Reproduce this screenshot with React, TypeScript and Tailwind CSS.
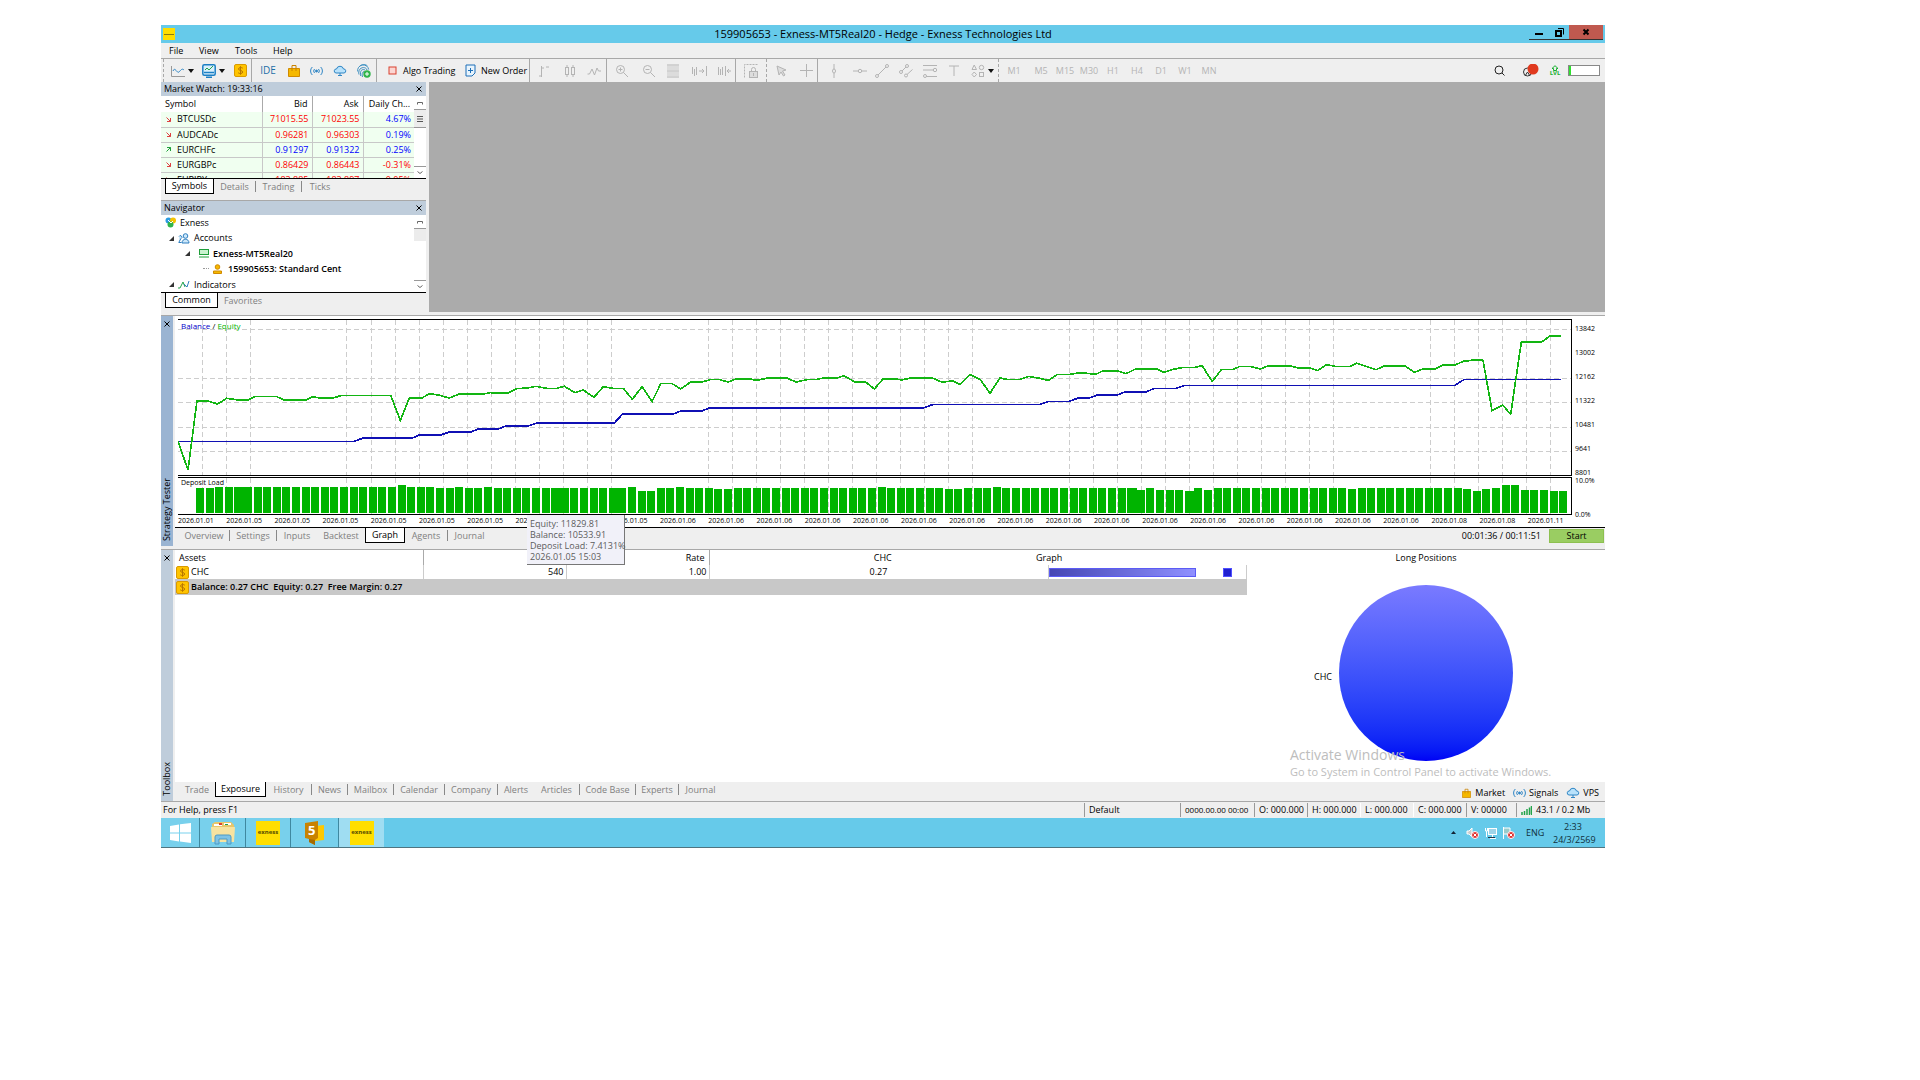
import { useState } from "react";
import type { ReactNode } from "react";

type Quote = { symbol: string; bid: string; ask: string; change: string; up: boolean; neg?: boolean };

const quotes: Quote[] = [
  { symbol: "BTCUSDc", bid: "71015.55", ask: "71023.55", change: "4.67%", up: false },
  { symbol: "AUDCADc", bid: "0.96281", ask: "0.96303", change: "0.19%", up: false },
  { symbol: "EURCHFc", bid: "0.91297", ask: "0.91322", change: "0.25%", up: true },
  { symbol: "EURGBPc", bid: "0.86429", ask: "0.86443", change: "-0.31%", up: false, neg: true },
  { symbol: "EURJPYc", bid: "183.885", ask: "183.897", change: "-0.05%", up: false, neg: true },
];

// curve points in thirds of a pixel, origin at the chart's top left
const equity =
  "0,364 30,450 57,242 90,243 119,252 146,235 181,240 211,240 231,229 294,229 318,240 384,240 404,230 426,234 466,234 491,226 638,226 667,301 694,234 730,235 754,221 782,225 813,234 844,222 916,222 936,218 989,219 1016,206 1049,204 1074,199 1106,205 1136,205 1159,199 1191,218 1216,210 1248,232 1276,200 1306,205 1336,205 1363,238 1392,200 1422,245 1449,190 1481,190 1508,207 1538,186 1571,186 1601,178 1621,178 1651,186 1676,176 1711,176 1736,181 1769,174 1826,174 1854,186 1888,179 1918,178 1936,174 1976,174 1998,167 2030,186 2063,186 2089,207 2116,176 2146,176 2171,180 2198,174 2263,174 2291,186 2326,183 2346,193 2376,164 2408,180 2436,220 2466,174 2486,178 2528,178 2551,169 2586,175 2611,181 2639,163 2676,163 2706,158 2754,163 2776,152 2816,152 2844,161 2871,148 2934,146 2956,157 2986,148 3016,142 3051,142 3072,137 3103,184 3131,148 3166,148 3186,139 3216,139 3246,147 3269,138 3339,138 3361,144 3396,144 3419,152 3446,134 3471,139 3516,139 3536,130 3594,149 3618,138 3681,138 3710,157 3736,146 3774,146 3796,135 3831,135 3856,124 3896,119 3915,121 3942,271 3974,255 3998,283 4030,66 4091,66 4116,48 4149,48";
const balance =
  "0,364 528,364 556,354 703,354 726,344 791,344 814,336 878,336 901,327 961,327 986,317 1052,317 1076,309 1309,309 1334,282 1486,282 1509,273 1571,273 1596,263 2239,263 2266,253 2588,253 2611,244 2674,244 2698,235 2734,234 2758,225 2818,225 2841,216 2904,216 2929,205 2996,205 3019,196 3831,196 3859,178 4149,178";

const gridSteps = Array.from({ length: 57 }, (_, k) => k).filter((k) => k < 3 || (k - 6) % 15 < 12 && k >= 6);
const gridRows = [28, 174, 247, 322, 395];

const loadTop: Record<number, number> = {
  2: 24, 21: 21, 27: 27, 30: 27, 45: 27, 46: 39, 47: 39, 50: 27, 54: 33, 55: 33, 71: 27, 78: 33, 79: 33, 83: 27,
  98: 36, 100: 36, 101: 36, 102: 36, 103: 39, 105: 36, 120: 33, 132: 33, 133: 39, 134: 33, 136: 21, 137: 21,
  138: 36, 139: 36, 140: 36, 141: 39, 142: 39,
};
const joined = [4, 37, 43, 97, 103];
const bars = Array.from({ length: 143 }, (_, i) => ({
  x: Math.round(18 + i * 9.6) * 3,
  w: joined.includes(i) ? 30 : 25,
  y: loadTop[i] ?? (i > 2 && i < 25 ? 27 : 30),
}));

const dates = Array.from({ length: 29 }, (_, i) => {
  if (i === 0) return "2026.01.01";
  if (i < 10) return "2026.01.05";
  if (i < 26) return "2026.01.06";
  return i < 28 ? "2026.01.08" : "2026.01.11";
});

const Icon = ({ children, w = 14, h = 14, color = "#b4b4b4" }: { children: ReactNode; w?: number; h?: number; color?: string }) => (
  <svg width={w} height={h} viewBox={`0 0 ${w} ${h}`} fill="none" stroke={color} strokeWidth="1" className="shrink-0">
    {children}
  </svg>
);

const Caret = () => (
  <svg width="6" height="4" viewBox="0 0 6 4" className="shrink-0">
    <path d="M0 0h6L3 4z" fill="#111" />
  </svg>
);

const Tool = ({ label, className, children }: { label: string; className: string; children: ReactNode }) => (
  <button aria-label={label} className={`flex h-full shrink-0 items-center justify-center ${className}`}>
    {children}
  </button>
);

const Sep = () => <div className="h-full w-px shrink-0 bg-[#a8a8a8]" />;
const Dots = () => <div className="h-full w-px shrink-0 border-l border-dashed border-[#a8a8a8]" />;

const Coin = () => (
  <Icon w={13} h={13} color="#d99a00">
    <rect x="0.5" y="0.5" width="12" height="12" rx="1.5" fill="#ffc400" />
    <path d="M8.8 4.2C8 3.3 4.5 3.1 4.5 5s4.2 1.1 4.2 3S5.2 9.900 4.200 8.800M6.500 2.200v8.600" stroke="#b87600" />
  </Icon>
);

const Waves = () => (
  <Icon w={13} h={10} color="#2f86c5">
    <circle cx="6.500" cy="5" r="1" fill="#2f86c5" />
    <path d="M4.500 3a3 3 0 0 0 0 4M8.500 3a3 3 0 0 1 0 4M2.300 1a5.500 5.500 0 0 0 0 8M10.700 1a5.500 5.500 0 0 1 0 8" />
  </Icon>
);

const Cloud = () => (
  <Icon w={14} h={12} color="#2f86c5">
    <path d="M3 8a2 2 0 0 1 .5-4 3.600 3.600 0 0 1 7 0 2 2 0 0 1 .5 4z" fill="#b9e2fb" />
    <path d="M7 8v3M5 10.500h4" />
  </Icon>
);

const Bag = ({ w = 12 }: { w?: number }) => (
  <svg width={w} height={w + 1} viewBox="0 0 12 13" fill="none" className="shrink-0">
    <path d="M.5 4.500h11v8H.5z" fill="#f5b800" stroke="#d08a00" />
    <path d="M4 7V1.500h4V7" stroke="#c98200" />
  </svg>
);

const TitleBar = () => (
  <header className="flex h-[18px] items-center bg-[#66caea]">
    <div className="w-24 pl-[2px]">
      <div className="flex h-3 w-3 items-center bg-[#ffde00] px-px"><div className="h-px w-full bg-[#8a7a10]" /></div>
    </div>
    <h1 className="flex-1 text-center text-[11px] leading-[18px] text-black">159905653 - Exness-MT5Real20 - Hedge - Exness Technologies Ltd</h1>
    <div className="flex h-full w-24 items-start justify-end pr-[2px]">
      <div className="flex h-[15px] border-b border-[#333]">
        <button aria-label="Minimize" className="flex w-5 items-center justify-center">
          <Icon w={10} h={10}><path d="M1 7h8" stroke="#000" strokeWidth="2" /></Icon>
        </button>
        <button aria-label="Restore" className="flex w-5 items-center justify-center">
          <Icon w={9} h={9} color="#000"><rect x="1" y="3" width="5" height="5" strokeWidth="2" /><path d="M3 .5h5.500v6" /></Icon>
        </button>
        <button aria-label="Close" className="flex w-[34px] items-center justify-center bg-[#c0594f]">
          <Icon w={8} h={8} color="#000"><path d="M1.500 1.500l5 5M6.500 1.500l-5 5" strokeWidth="2" /></Icon>
        </button>
      </div>
    </div>
  </header>
);

const MenuBar = () => (
  <nav className="flex h-4 items-center border-b border-[#a8a8a8] pl-2 text-[9px] text-black">
    <button className="w-[30px] text-left">File</button>
    <button className="w-9 text-left">View</button>
    <button className="w-[38px] text-left">Tools</button>
    <button className="text-left">Help</button>
  </nav>
);

const Toolbar = () => (
  <div className="flex h-[23px] items-center overflow-hidden text-[9px] whitespace-nowrap text-black">
    <div className="flex h-full w-[6px] shrink-0 pl-[2px]"><Dots /></div>
    <Tool label="Chart" className="w-[30px] gap-[3px]">
      <Icon><path d="M.5 2v10.500H14" stroke="#999" /><path d="M2 7c2-5 4 3 6 1s3-4 5-2" stroke="#2f86c5" /></Icon>
      <Caret />
    </Tool>
    <Tool label="Indicators" className="w-8 gap-[3px]">
      <Icon color="#1c7fc4"><rect x=".8" y=".8" width="12.400" height="10.400" rx="1.500" fill="#d9effc" strokeWidth="1.500" /><path d="M3 6l2-2 2 2 4-4" stroke="#22a34a" /><path d="M2 8.500h10M4 13.300h6" strokeWidth="1.500" /></Icon>
      <Caret />
    </Tool>
    <Tool label="Quotes" className="w-[22px]"><Coin /></Tool>
    <Sep />
    <Tool label="IDE" className="w-8"><span className="text-[10px] text-[#1c6fa8]">IDE</span></Tool>
    <Tool label="Market" className="w-5"><Bag /></Tool>
    <Tool label="Signals" className="w-6"><Waves /></Tool>
    <Tool label="VPS" className="w-6"><Cloud /></Tool>
    <Tool label="Login" className="w-6">
      <Icon color="#3d8fc0">
        <path d="M.7 7.500a5.500 5.500 0 0 1 11-2M2 10.500a5 5 0 0 1-.2-2.500c.5-5.500 7.500-5.500 8.200-2M3.700 12c-1-5 1-7.500 4.300-6M5.500 13c-1-3 0-5 1.500-5.500M2.500 2.500C5 0 8.500 0 10.500 2" />
        <circle cx="10" cy="10" r="3.700" fill="#2fb44a" stroke="none" /><path d="M10 8v4M8 10h4" stroke="#fff" />
      </Icon>
    </Tool>
    <Sep />
    <button className="flex h-full w-[84px] shrink-0 items-center gap-[6px] pl-[11px]">
      <Icon w={9} h={9} color="#d9402f"><rect x="1" y="1" width="7" height="7" fill="#fbd6d2" /></Icon>Algo Trading
    </button>
    <button className="flex h-full w-[68px] shrink-0 items-center gap-[5px] pl-1">
      <Icon w={11} h={13} color="#1c6fb8"><path d="M1 1h9v8l-3 3H1z" fill="#e8f4fd" /><path d="M5.500 4v5M3 6.500h5" /></Icon>New Order
    </button>
    <Sep />
    <Tool label="Bar chart" className="w-7"><Icon w={12}><path d="M3.500 2v11M1 12h2.500M3.500 4H6M8 3h3" /></Icon></Tool>
    <Tool label="Candles" className="w-6"><Icon w={12}><rect x="1.500" y="3.500" width="3" height="7" /><rect x="7.500" y="3.500" width="3" height="7" /><path d="M3 1v2M3 11v2M9 1v2M9 11v2" /></Icon></Tool>
    <Tool label="Line chart" className="w-6"><Icon><path d="M.5 10h2l2.500-5 2.500 6L10 4l1.500 3H14" /></Icon></Tool>
    <Sep />
    <Tool label="Zoom in" className="w-[30px]"><Icon><circle cx="5.500" cy="5.500" r="4" /><path d="M8.500 8.500l4.500 4.500M3.500 5.500h4M5.500 3.500v4" /></Icon></Tool>
    <Tool label="Zoom out" className="w-6"><Icon><circle cx="5.500" cy="5.500" r="4" /><path d="M8.500 8.500l4.500 4.500M3.500 5.500h4" /></Icon></Tool>
    <Tool label="Tile" className="w-6"><Icon w={12}><path d="M0 4h12M0 10h12" stroke="#dcdcdc" strokeWidth="4" /><path d="M0 1h12M0 7h12M0 13h12" /></Icon></Tool>
    <Tool label="Scroll to end" className="w-7"><Icon w={16}><path d="M1.500 3v7M3.500 5v7M5.500 3v8M8 7h5M11 5l2 2-2 2M15.500 2v10" /></Icon></Tool>
    <Tool label="Shift chart" className="w-[22px]"><Icon><path d="M1.500 3v8M3.500 5v6M5.500 3v8M8.500 2v10M14 7h-4M12 5l-2 2 2 2" /></Icon></Tool>
    <Sep />
    <Tool label="Lock" className="w-[30px]">
      <Icon><path d="M.5 13.500V.5h13" strokeDasharray="2 1" /><rect x="5.500" y="7.500" width="8" height="6" fill="#ddd" /><path d="M7.500 7V5.500a2 2 0 0 1 4 0V7M9.500 9v3" /></Icon>
    </Tool>
    <Dots />
    <Tool label="Cursor" className="w-7"><Icon w={11}><path d="M1 2l9 4-3.500 1L9 11l-1.500 1L5 8l-2 3z" fill="#ddd" /></Icon></Tool>
    <Tool label="Crosshair" className="w-[22px]"><Icon w={13} h={13}><path d="M0 6.500h5M8 6.500h5M6.500 0v5M6.500 8v5M5 6.500h3M6.500 5v3" /></Icon></Tool>
    <Sep />
    <Tool label="Vertical line" className="w-8"><Icon w={6}><path d="M3 0v5M3 9v5" /><ellipse cx="3" cy="7" rx="1.500" ry="2" /></Icon></Tool>
    <Tool label="Horizontal line" className="w-5"><Icon><path d="M0 7h5M9 7h5" /><circle cx="7" cy="7" r="1.700" /></Icon></Tool>
    <Tool label="Trend line" className="w-6"><Icon><circle cx="12" cy="2" r="1.500" /><circle cx="2" cy="12" r="1.500" /><path d="M3 11l8-8" /></Icon></Tool>
    <Tool label="Channel" className="w-6"><Icon><circle cx="8" cy="2" r="1.500" /><circle cx="2" cy="8" r="1.500" /><circle cx="7" cy="11.500" r="1.500" /><path d="M3 7l4-4M8 10.500l5.500-5" /></Icon></Tool>
    <Tool label="Fibonacci" className="w-6"><Icon><path d="M0 1.500h14M0 6h10M3 12.500h11" /><circle cx="12" cy="6" r="1.700" /><circle cx="2" cy="12" r="1.500" /></Icon></Tool>
    <Tool label="Text" className="w-6"><Icon w={10} h={12}><path d="M0 1h10M5 1v10" /></Icon></Tool>
    <Tool label="Shapes" className="w-8 gap-[3px]">
      <Icon><path d="M1 5.500h4.500L3.200 1zM3.200 8l2.300 2.500-2.300 2.500L1 10.500z" /><circle cx="10.500" cy="3.500" r="2.200" /><rect x="8.500" y="8.500" width="4" height="4" /></Icon>
      <Caret />
    </Tool>
    <Dots />
    {["M1", "M5", "M15", "M30", "H1", "H4", "D1", "W1", "MN"].map((tf) => (
      <button key={tf} className={`shrink-0 text-center text-[#b4b4b4] ${tf === "M1" ? "w-[30px]" : "w-6"}`}>{tf}</button>
    ))}
    <div className="ml-auto flex items-center gap-2 pr-[5px]">
      <div className="flex w-5 items-center"><Icon w={11} h={11} color="#222"><circle cx="5" cy="5" r="4" /><path d="M8 8l2.500 2.500" /></Icon></div>
      <Icon w={20} h={14} color="#333"><circle cx="5.500" cy="8" r="4" /><path d="M3 12l2.500-4 2.500 4" /><circle cx="11" cy="5" r="5.500" fill="#e0391e" stroke="none" /></Icon>
      <div className="flex w-[10px] flex-col items-center text-[6px] leading-[5px] font-bold text-[#16b02e]">
        <Icon w={8} h={6} color="#16b02e"><path d="M4 .7L1 3.500h1.500v2h3v-2H7z" /></Icon>LVL
      </div>
      <div className="h-[11px] w-8 border border-[#888] bg-white"><div className="h-full w-[2px] bg-[#2fe02f]" /></div>
    </div>
  </div>
);

const PanelHead = ({ title }: { title: string }) => (
  <div className="flex h-[14px] items-center justify-between bg-[#bfcddb] pr-1 pl-[3px] text-[9px] text-black">
    <span>{title}</span>
    <button aria-label={`Close ${title}`}><Icon w={6} h={6} color="#000"><path d="M.5.5l5 5M5.500.5l-5 5" /></Icon></button>
  </div>
);

const Scroll = ({ grip }: { grip?: boolean }) => (
  <div className="flex w-3 shrink-0 flex-col items-center justify-between bg-white">
    <div className="w-full">
      <div className="flex h-[14px] items-center justify-center border-b border-[#999]"><Icon w={6} h={4} color="#666"><path d="M.5 3.500V1.500h5v2" /></Icon></div>
      <div className={`flex items-center justify-center bg-[#ececec] ${grip ? "h-[18px] border-b border-[#999]" : "h-3"}`}>
        {grip && <Icon w={6} h={6} color="#555"><path d="M0 .5h6M0 3h6M0 5.500h6" /></Icon>}
      </div>
    </div>
    <div className="flex h-3 w-full items-center justify-center border-t border-[#999]"><Icon w={6} h={4} color="#666"><path d="M.5.500l2.500 2 2.500-2" /></Icon></div>
  </div>
);

type TabDef = { name: string; w: string; sep?: boolean };

const Tabs = ({ tabs, start, pad, height }: { tabs: TabDef[]; start: string; pad: string; height: string }) => {
  const [active, setActive] = useState(start);
  return (
    <div className={`flex min-w-0 items-start text-[9px] ${pad} ${height}`}>
      {tabs.map((t) => (
        <button
          key={t.name}
          onClick={() => setActive(t.name)}
          className={`h-[15px] shrink-0 leading-[14px] ${t.w} ${
            active === t.name ? "border border-t-0 border-black bg-white text-black" : "text-[#808080]"
          }`}
        >
          <span className={`flex h-[11px] items-center justify-center ${t.sep ? "border-r border-[#888]" : ""}`}>{t.name}</span>
        </button>
      ))}
    </div>
  );
};

const MarketWatch = () => (
  <section>
    <PanelHead title="Market Watch: 19:33:16" />
    <div className="flex h-[83px] overflow-hidden border-b border-black bg-white">
      <div className="min-w-0 flex-1 overflow-hidden">
        <table className="w-full table-fixed border-collapse text-[9px] leading-[14px]">
          <thead>
            <tr className="h-4 text-black">
              <th className="w-[101px] pl-1 text-left font-normal">Symbol</th>
              <th className="w-[50px] border-l border-[#aaa] pr-1 text-right font-normal">Bid</th>
              <th className="w-[51px] border-l border-[#aaa] pr-1 text-right font-normal">Ask</th>
              <th className="border-l border-[#aaa] pr-1 text-right font-normal whitespace-nowrap">Daily Ch...</th>
            </tr>
          </thead>
          <tbody>
            {quotes.map((q) => (
              <tr key={q.symbol} className={`h-[15px] border-b border-[#c8c8c8] bg-[#f0fff0] ${q.up ? "text-[#0000ff]" : "text-[#ff0000]"}`}>
                <td className="pl-[5px] text-black">
                  <span className="flex items-center gap-[6px]">
                    {q.up ? (
                      <Icon w={5} h={5} color="#1f9e3a"><path d="M.5 4.500l4-4M1 .5h3.500V4" /></Icon>
                    ) : (
                      <Icon w={5} h={5} color="#dd4040"><path d="M.5.500l4 4M1 4.500h3.500V1" /></Icon>
                    )}
                    {q.symbol}
                  </span>
                </td>
                <td className="border-l border-[#c8c8c8] pr-[3px] text-right">{q.bid}</td>
                <td className="border-l border-[#c8c8c8] pr-[3px] text-right">{q.ask}</td>
                <td className={`border-l border-[#c8c8c8] pr-[3px] text-right ${q.neg ? "text-[#ff0000]" : "text-[#0000ff]"}`}>{q.change}</td>
              </tr>
            ))}
          </tbody>
        </table>
      </div>
      <Scroll grip />
    </div>
    <Tabs
      start="Symbols"
      pad="pl-1"
      height="h-[21px]"
      tabs={[
        { name: "Symbols", w: "w-[49px]" },
        { name: "Details", w: "w-[42px]", sep: true },
        { name: "Trading", w: "w-[46px]", sep: true },
        { name: "Ticks", w: "w-9" },
      ]}
    />
  </section>
);

const Node = () => <Icon w={5} h={5} color="#333"><path d="M0 5h5V0z" fill="#333" stroke="none" /></Icon>;
const row = "flex flex-1 items-center gap-1";

const Navigator = () => (
  <section className="border-t border-[#a8a8a8]">
    <PanelHead title="Navigator" />
    <div className="flex h-[78px] border-b border-black bg-white">
      <div className="flex flex-1 flex-col text-[9px] text-black">
        <div className={`${row} pl-1`}>
          <Icon w={11} h={11} color="none"><circle cx="3.500" cy="3.500" r="3" fill="#2b9be0" /><circle cx="8" cy="3.500" r="3" fill="#f5c400" /><circle cx="5.500" cy="7.500" r="3" fill="#2fb44a" /><path d="M3 3l3 3 2-2" stroke="#fff" /></Icon>
          Exness
        </div>
        <div className={`${row} pl-2`}>
          <Node />
          <Icon w={12} h={11} color="#2f7fc0"><circle cx="7.500" cy="3" r="2.300" fill="#cde8fa" /><path d="M4 10c0-5 7-5 7 0zM.5 9.500h3M1 3.500a1.500 1.500 0 1 1 2 2L1 9" fill="#cde8fa" /></Icon>
          Accounts
        </div>
        <div className={`${row} pl-6 font-semibold`}>
          <Node />
          <span className="w-px" />
          <Icon w={10} h={9} color="#1f9e3a"><rect x=".5" y=".5" width="9" height="5" fill="#c9f2cf" /><path d="M0 8h10" /></Icon>
          Exness-MT5Real20
        </div>
        <div className={`${row} pl-[42px] font-semibold`}>
          <span className="w-[6px] border-t border-dotted border-[#999]" />
          <Icon w={9} h={10} color="#d08a00"><circle cx="4.500" cy="3" r="2.300" fill="#f5b800" /><path d="M.5 9.500V7h8v2.500z" fill="#f5b800" /></Icon>
          <span className="pl-[2px]">159905653: Standard Cent</span>
        </div>
        <div className={`${row} pl-2`}>
          <Node />
          <Icon w={12} h={9} color="#22a34a"><path d="M0 8h2l3-6 2 5" /><path d="M6 4l3 3 2-6" stroke="#2f7fc0" /></Icon>
          Indicators
        </div>
      </div>
      <Scroll />
    </div>
    <Tabs
      start="Common"
      pad="pl-1"
      height="h-[19px]"
      tabs={[
        { name: "Common", w: "w-[53px]" },
        { name: "Favorites", w: "w-[50px]" },
      ]}
    />
  </section>
);

const SideStrip = ({ title, color }: { title: string; color: string }) => (
  <div className={`flex w-3 shrink-0 flex-col items-center justify-between py-[5px] ${color}`}>
    <button aria-label={`Close ${title}`}><Icon w={6} h={6} color="#000"><path d="M.5.5l5 5M5.500.5l-5 5" /></Icon></button>
    <span className="rotate-180 text-[9px] leading-[12px] text-black [writing-mode:vertical-rl]">{title}</span>
  </div>
);

const Tooltip = () => (
  <div className="absolute top-[199px] left-[366px] z-10 h-[50px] w-[98px] border-r border-b border-[#777] bg-[#f1f1f9] pt-[3px] pl-[3px] text-[9px] leading-[11px] whitespace-nowrap text-[#5c5c5c]">
    <p>Equity: 11829.81</p>
    <p>Balance: 10533.91</p>
    <p>Deposit Load: 7.4131%</p>
    <p>2026.01.05 15:03</p>
  </div>
);

const Graph = () => (
  <div className="flex h-[212px] border-b border-black bg-white pt-[3px] pl-[3px]">
    <div className="min-w-0 flex-1">
      <div className="relative h-[157px] border-y border-r border-black">
        <svg className="block h-full w-full" viewBox="0 0 4179 465" preserveAspectRatio="none" shapeRendering="crispEdges" fill="none">
          <g stroke="#cdcdcd" strokeWidth="3" strokeDasharray="15 9">
            {gridSteps.map((k) => <path key={k} d={`M${73 + Math.round(k * 72.22)} 0v465`} />)}
            {gridRows.map((y) => <path key={y} d={`M0 ${y}h4179`} />)}
          </g>
          <polyline points={balance} stroke="#1010b4" strokeWidth="5" />
          <polyline points={equity} stroke="#12b512" strokeWidth="5" />
        </svg>
        <div className="absolute top-px left-[3px] text-[8px] leading-[10px] text-black">
          <span className="text-[#0000c8]">Balance</span> / <span className="text-[#00b400]">Equity</span>
        </div>
      </div>
      <div className="relative mt-px h-[38px] border-y border-r border-black">
        <svg className="block h-full w-full" viewBox="0 0 4179 108" preserveAspectRatio="none" shapeRendering="crispEdges">
          {gridSteps.map((k) => <path key={k} d={`M${73 + Math.round(k * 72.22)} 0v108`} stroke="#cdcdcd" strokeWidth="3" strokeDasharray="15 9" />)}
          {bars.map((b, i) => <rect key={i} x={b.x} y={b.y} width={b.w} height={105 - b.y} fill="#00b400" />)}
        </svg>
        <div className="absolute top-0 left-[2px] bg-white px-px text-[7px] leading-[9px] text-black">Deposit Load</div>
      </div>
      <div className="-mr-1 grid grid-cols-29 text-[7px] leading-[11px] text-black">
        {dates.map((d, i) => <span key={i} className="whitespace-nowrap">{d}</span>)}
      </div>
    </div>
    <div className="flex h-[200px] w-[33px] shrink-0 flex-col pl-[3px] text-[7px] text-black">
      {["13842", "13002", "12162", "11322", "10481", "9641"].map((v) => <span key={v} className="h-6 leading-5">{v}</span>)}
      <span className="h-[14px] leading-5">8801</span>
      <span className="leading-2">10.0%</span>
      <span className="mt-auto leading-2">0.0%</span>
    </div>
  </div>
);

const StrategyTester = () => (
  <section className="relative flex h-[234px] gap-[2px] border-t border-[#a8a8a8]">
    <SideStrip title="Strategy Tester" color="mb-[3px] bg-[#9ab4d2]" />
    <div className="min-w-0 flex-1">
      <Graph />
      <div className="flex">
        <Tabs
          start="Graph"
          pad="pl-1"
          height="h-5"
          tabs={[
            { name: "Overview", w: "w-[51px]", sep: true },
            { name: "Settings", w: "w-[47px]", sep: true },
            { name: "Inputs", w: "w-10" },
            { name: "Backtest", w: "w-12" },
            { name: "Graph", w: "w-10" },
            { name: "Agents", w: "w-[43px]", sep: true },
            { name: "Journal", w: "w-[43px]" },
          ]}
        />
        <div className="ml-auto flex items-start gap-2 pt-px pr-px">
          <span className="text-[9px] leading-[14px] text-black">00:01:36 / 00:11:51</span>
          <button className="h-[14px] w-[55px] border border-[#8dc050] bg-[#9acd62] text-[9px] leading-3 text-black">Start</button>
        </div>
      </div>
    </div>
    <Tooltip />
  </section>
);

const Exposure = () => (
  <div className="flex h-[232px] bg-white text-[9px] text-black">
    <div className="min-w-0 flex-1">
      <table className="w-full table-fixed border-collapse leading-[14px]">
        <thead>
          <tr className="h-[15px]">
            <th className="w-[248px] border-r border-[#aaa] pl-1 text-left font-normal">Assets</th>
            <th className="w-[143px]" />
            <th className="w-[143px] border-r border-[#aaa] pr-1 text-right font-normal">Rate</th>
            <th className="w-[339px] pl-2 text-center font-normal">CHC</th>
            <th className="font-normal"><span className="flex -translate-x-3">Graph</span></th>
          </tr>
        </thead>
        <tbody>
          <tr className="h-[14px]">
            <td className="border-r border-[#ccc] pl-px"><span className="flex items-center gap-[2px]"><Coin />CHC</span></td>
            <td className="border-r border-[#ccc] pr-[2px] text-right">540</td>
            <td className="border-r border-[#ccc] pr-[2px] text-right">1.00</td>
            <td className="border-r border-[#ccc] text-center">0.27</td>
            <td className="border-r border-[#ccc]">
              <div className="flex items-center justify-between pr-[14px]">
                <div className="h-[9px] w-[147px] border border-[#5b5bf5] bg-linear-to-r from-[#4646b4] to-[#9090ff]" />
                <div className="h-[9px] w-[9px] border border-[#5050ff] bg-[#2020d0]" />
              </div>
            </td>
          </tr>
          <tr className="h-4 bg-[#c8c8c8] font-semibold">
            <td colSpan={5} className="pl-px"><span className="flex items-center gap-[2px]"><Coin />Balance: 0.27 CHC&nbsp; Equity: 0.27&nbsp; Free Margin: 0.27</span></td>
          </tr>
        </tbody>
      </table>
    </div>
    <div className="relative flex w-[358px] shrink-0 flex-col items-center">
      <h2 className="leading-[16px]">Long Positions</h2>
      <div className="mt-[19px] flex w-full items-center">
        <span className="flex-1 px-[7px] pt-2 text-right">CHC</span>
        <div className="h-[176px] w-[174px] rounded-[50%] bg-linear-to-b from-[#7a7aff] to-[#0000f5]" />
        <span className="flex-1 px-[7px]" />
      </div>
      <div className="absolute top-[196px] left-[43px] whitespace-nowrap text-[#bdbdbd]">
        <p className="text-[14px] leading-[18px]">Activate Windows</p>
        <p className="text-[11px] leading-[16px]">Go to System in Control Panel to activate Windows.</p>
      </div>
    </div>
  </div>
);

const Toolbox = () => (
  <section className="flex gap-[2px] border-t border-[#a8a8a8]">
    <SideStrip title="Toolbox" color="bg-[#bfcddb]" />
    <div className="min-w-0 flex-1">
      <Exposure />
      <div className="flex h-[19px] items-start">
        <Tabs
          start="Exposure"
          pad="pl-1"
          height="h-[19px]"
          tabs={[
            { name: "Trade", w: "w-9" },
            { name: "Exposure", w: "w-[51px]" },
            { name: "History", w: "w-[46px]", sep: true },
            { name: "News", w: "w-9", sep: true },
            { name: "Mailbox", w: "w-[46px]", sep: true },
            { name: "Calendar", w: "w-[51px]", sep: true },
            { name: "Company", w: "w-[53px]", sep: true },
            { name: "Alerts", w: "w-9" },
            { name: "Articles", w: "w-[46px]", sep: true },
            { name: "Code Base", w: "w-[56px]", sep: true },
            { name: "Experts", w: "w-[43px]", sep: true },
            { name: "Journal", w: "w-[43px]" },
          ]}
        />
        <div className="ml-auto flex h-[19px] items-center gap-2 pt-[2px] pr-[6px] text-[9px] text-black">
          <a href="#market" className="flex items-center gap-1"><Bag w={9} />Market</a>
          <a href="#signals" className="flex items-center gap-[3px]"><Waves />Signals</a>
          <a href="#vps" className="flex items-center gap-[3px]"><Cloud />VPS</a>
        </div>
      </div>
    </div>
  </section>
);

const StatusBar = () => (
  <footer className="flex h-[17px] items-center border-t border-[#a8a8a8] text-[9px] whitespace-nowrap text-black">
    <span className="flex-1 pl-[2px]">For Help, press F1</span>
    <span className="w-24 border-l border-[#999] pl-1">Default</span>
    <span className="w-[74px] border-l border-[#999] pl-1 text-[8px] leading-[14px]">0000.00.00 00:00</span>
    <span className="w-[53px] border-l border-[#999] pl-1">O: 000.000</span>
    <span className="w-[53px] border-l border-[#999] pl-1">H: 000.000</span>
    <span className="w-[53px] border-l border-white pl-1">L: 000.000</span>
    <span className="w-[53px] border-l border-white pl-1">C: 000.000</span>
    <span className="w-[50px] border-l border-[#999] pl-1">V: 00000</span>
    <span className="flex w-[89px] items-center gap-1 border-l border-[#999] pl-1">
      <Icon w={11} h={9} color="#22a34a"><path d="M1 9V6M3.500 9V5M6 9V3M8.500 9V1.500M10.500 9V0" strokeWidth="1.500" /></Icon>
      43.1 / 0.2 Mb
    </span>
  </footer>
);

const ExnessTile = () => (
  <div className="flex h-6 w-6 items-center justify-center bg-[#ffde00] text-[6px] font-bold text-[#554a00]">exness</div>
);
const task = "flex h-full items-center justify-center border-r border-[#3f88a0]";

const Taskbar = () => (
  <div className="flex h-[30px] items-center border-b border-[#4f7480] bg-[#66caea]">
    <button aria-label="Start menu" className={`${task} w-[39px] bg-[#78d0ec]`}>
      <Icon w={21} h={20} color="none"><path d="M0 3l9-1.500V9.500H0zM10 1.300L21 0v9.500H10zM0 10.500h9v8L0 17zM10 10.500h11V20l-11-1.500z" fill="#fff" /></Icon>
    </button>
    <button aria-label="File Explorer" className={`${task} w-[46px] bg-[#78d0ec]`}>
      <Icon w={24} h={24} color="none">
        <path d="M1 3l3-2h16l3 3v16H1z" fill="#e8c66a" /><path d="M3 3h8v2H3zM13 2h7v2h-7z" fill="#fff" /><path d="M8 2h3v2H8z" fill="#d9402f" /><path d="M14 3h3v1h-3z" fill="#22a34a" />
        <path d="M0 6h24l-1 15H1z" fill="#f7e3a0" /><path d="M4 23v-7q0-2 2-2h12q2 0 2 2v7h-4v-5H8v5z" fill="#7ec3e6" stroke="#4d9ac4" />
      </Icon>
    </button>
    <button aria-label="Exness" className={`${task} w-[45px] bg-[#78d0ec]`}><ExnessTile /></button>
    <button aria-label="MetaTrader 5" className={`${task} w-[48px] bg-[#78d0ec]`}>
      <svg width="20" height="24" viewBox="0 0 20 24">
        <path d="M10 5l9-1v15l-9 1z" fill="#ffc800" /><path d="M0 2l13-2v17l-3 2v5l-6-3v-3l-4-1z" fill="#c98200" /><path d="M4 18l6 1v5l-6-3z" fill="#a56a00" />
        <text x="3" y="14" fontSize="13" fontWeight="bold" fill="#fff">5</text>
      </svg>
    </button>
    <button aria-label="Exness window" className="flex h-full w-[45px] items-center justify-center bg-[#9fddf2]"><ExnessTile /></button>
    <div className="ml-auto flex items-center text-[9px] leading-[13px] text-[#10303c]">
      <svg width="5" height="3" viewBox="0 0 5 3" className="mr-[10px]"><path d="M0 3h5L2.500 0z" fill="#123" /></svg>
      <div className="flex gap-[5px]">
        <Icon w={13} h={12} color="#fff"><path d="M1 4h2l3-3v9L3 7H1z" fill="#ccc" /><circle cx="9" cy="8" r="3.500" fill="#e03030" /><path d="M7.500 6.500l3 3M10.500 6.500l-3 3" /></Icon>
        <Icon w={13} h={12} color="#234"><path d="M8.500 8v3M6 11.500h6M1.500 1v3h2V1M2.500 4v6" stroke="#fff" /><rect x="4.500" y="1.500" width="8" height="6" fill="#9fd4e8" stroke="#fff" /><path d="M4 10.500h7" /></Icon>
        <Icon w={13} h={12} color="#fff"><path d="M1.500 0v12M2 1h6v6H2" fill="#9cc" /><circle cx="9" cy="8" r="3.500" fill="#e03030" /><path d="M7.500 6.500l3 3M10.500 6.500l-3 3" /></Icon>
      </div>
      <span className="ml-[11px] w-[27px]">ENG</span>
      <div className="mr-3 w-10 text-center"><p>2:33</p><p>24/3/2569</p></div>
    </div>
  </div>
);

const App = () => {
  return (
    <div className="min-h-screen bg-white pt-[25px] pr-[315px] pl-[161px] font-['Open_Sans','Noto_Sans',sans-serif]">
      <main className="bg-[#efefef]">
        <TitleBar />
        <MenuBar />
        <Toolbar />
        <div className="flex gap-[3px] pb-[3px]">
          <aside className="w-[265px] shrink-0">
            <MarketWatch />
            <Navigator />
          </aside>
          <div className="flex-1 bg-[#ababab]" />
        </div>
        <StrategyTester />
        <Toolbox />
        <StatusBar />
        <Taskbar />
      </main>
    </div>
  );
};

export default App;
